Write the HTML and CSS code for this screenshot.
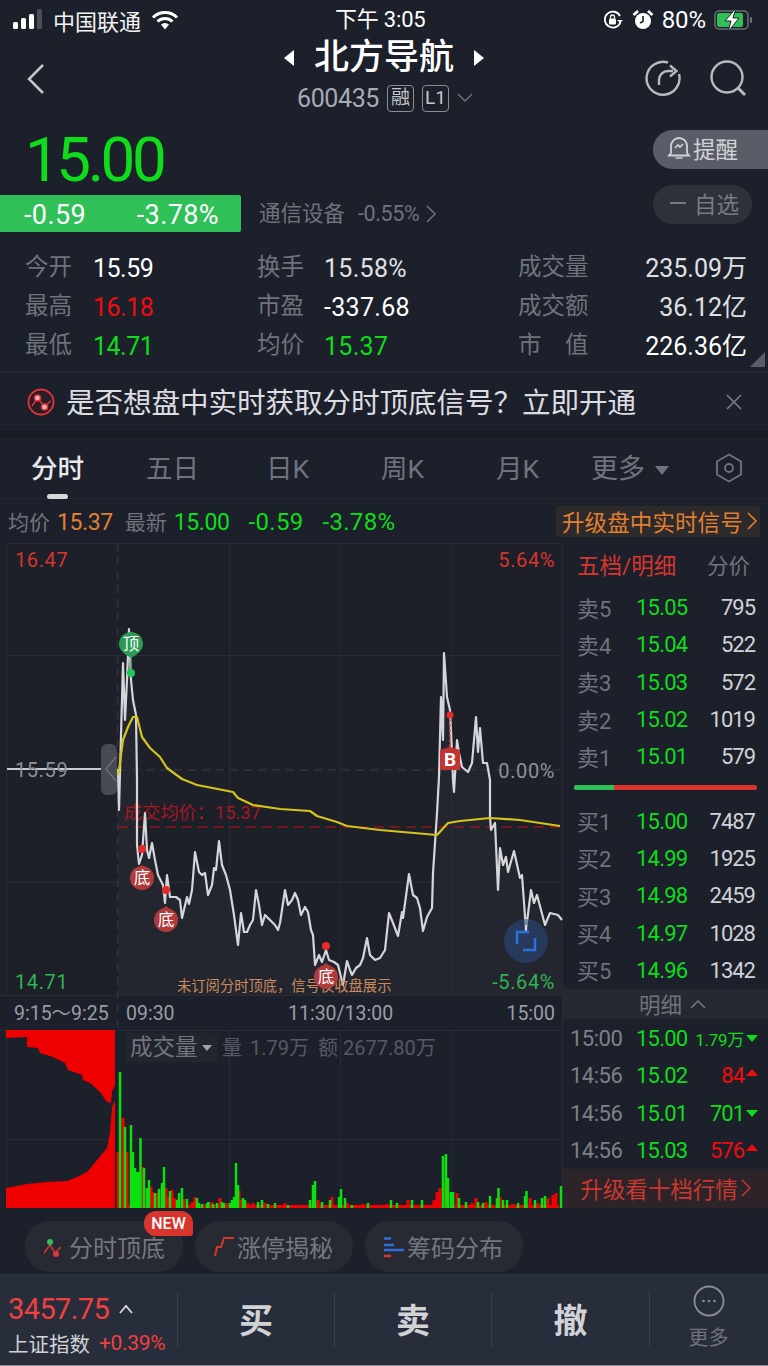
FILE: index.html
```html
<!DOCTYPE html>
<html lang="zh">
<head>
<meta charset="utf-8">
<title>北方导航</title>
<link rel="stylesheet" href="styles.css">
</head>
<body>
<div class="phone">
  <div class="status">
    <div class="status-left">
      <svg class="sig" width="32" height="24" viewBox="0 0 32 24"><rect x="0" y="14" width="5" height="7" rx="1.5" fill="#fff"/><rect x="8" y="10" width="5" height="11" rx="1.5" fill="#fff"/><rect x="16" y="6" width="5" height="15" rx="1.5" fill="#fff"/><rect x="24" y="1" width="5" height="20" rx="1.5" fill="#4b4e58"/></svg>
      <span class="carrier">中国联通</span>
      <svg class="wifi" width="28" height="22" viewBox="0 0 28 22"><path d="M2 8.5a17 17 0 0 1 24 0M6.500 12.500a11 11 0 0 1 15 0" fill="none" stroke="#fff" stroke-width="3"/><path d="M10 15.500a6 6 0 0 1 8 0L14 20.500z" fill="#fff"/></svg>
    </div>
    <span class="clock">下午 3:05</span>
    <div class="status-right">
      <svg width="22" height="22" viewBox="0 0 22 22"><path d="M18.500 13a8 8 0 1 1-.5-6" fill="none" stroke="#fff" stroke-width="1.800"/><path d="M21 11l-3 3-3-3z" fill="#fff"/><rect x="7" y="9.500" width="7" height="6" rx="1" fill="#fff"/><path d="M8.500 9.500V8a2 2 0 0 1 4 0v1.500" fill="none" stroke="#fff" stroke-width="1.300"/></svg>
      <svg class="alarm" width="22" height="22" viewBox="0 0 22 22"><circle cx="11" cy="12" r="8" fill="#fff"/><path d="M11 7v5.500l-3 1.500" fill="none" stroke="#1c202b" stroke-width="1.600"/><path d="M1.500 6L6 2M20.500 6L16 2" stroke="#fff" stroke-width="2.800"/></svg>
      <span class="batt-pct">80%</span>
      <svg width="40" height="24" viewBox="0 0 40 24"><rect x="1" y="3" width="33" height="18" rx="4" fill="none" stroke="#6c6f78" stroke-width="1.500"/><rect x="3" y="5" width="26" height="14" rx="2" fill="#2fc157"/><rect x="36" y="9" width="2" height="6" rx="1" fill="#6c6f78"/><path d="M22 0L11 13h6l-3 11 11-14h-6z" fill="#fff" stroke="#1c202b"/></svg>
    </div>
  </div>

  <header class="nav">
    <svg class="back" width="22" height="34" viewBox="0 0 22 34"><path d="M18 3L4 17l14 14" fill="none" stroke="#c4c6cb" stroke-width="2.500"/></svg>
    <div class="nav-mid">
      <div class="title-row">
        <svg width="12" height="18" viewBox="0 0 12 18"><path d="M11 1v16L1 9z" fill="#fff"/></svg>
        <span class="title">北方导航</span>
        <svg width="12" height="18" viewBox="0 0 12 18"><path d="M1 1v16L11 9z" fill="#fff"/></svg>
      </div>
      <div class="code-row">
        <span class="code">600435</span>
        <span class="tag">融</span>
        <span class="tag">L1</span>
        <svg width="16" height="10" viewBox="0 0 16 10"><path d="M1 1l7 7 7-7" fill="none" stroke="#6f737d" stroke-width="1.300"/></svg>
      </div>
    </div>
    <div class="nav-icons">
      <svg width="38" height="38" viewBox="0 0 38 38"><path d="M24 3.500A16.500 16.500 0 1 0 35 15" fill="none" stroke="#b8bac0" stroke-width="2.400"/><path d="M15 26v-5a9 9 0 0 1 9-9h5" fill="none" stroke="#b8bac0" stroke-width="2.400"/><path d="M26 6.500l6.500 5.500-6.500 5.500" fill="none" stroke="#b8bac0" stroke-width="2.400"/></svg>
      <svg width="38" height="38" viewBox="0 0 38 38"><circle cx="18" cy="18" r="15.500" fill="none" stroke="#b8bac0" stroke-width="2.400"/><path d="M29 29l7 7" stroke="#b8bac0" stroke-width="3"/></svg>
    </div>
  </header>

  <section class="quote">
    <div class="quote-top">
      <div class="quote-left">
        <div class="price">15.00</div>
        <div class="quote-sub">
          <div class="change"><span>-0.59</span><span>-3.78%</span></div>
          <span class="sector">通信设备</span>
          <span class="sector-pct">-0.55%</span>
          <svg width="12" height="20" viewBox="0 0 12 20"><path d="M2 2l8 8-8 8" fill="none" stroke="#6f737d" stroke-width="1.500"/></svg>
        </div>
      </div>
      <div class="quote-btns">
        <div class="btn-remind">
          <svg width="24" height="26" viewBox="0 0 24 26"><path d="M4 18V11a8 8 0 0 1 16 0v7l2 2.500H2z" fill="none" stroke="#d0d2d6" stroke-width="1.800"/><path d="M8.500 23h7M8 13l3-3 2 2 3-3" fill="none" stroke="#d0d2d6" stroke-width="1.600"/></svg>
          <span>提醒</span>
        </div>
        <div class="btn-watch"><span class="dash"></span><span>自选</span></div>
      </div>
    </div>
    <div class="stats">
      <div class="stat s1"><span class="lab">今开</span><span class="val">15.59</span></div>
      <div class="stat s2"><span class="lab">换手</span><span class="val soft">15.58%</span></div>
      <div class="stat s3"><span class="lab">成交量</span><span class="val soft">235.09万</span></div>
      <div class="stat s1"><span class="lab">最高</span><span class="val red">16.18</span></div>
      <div class="stat s2"><span class="lab">市盈</span><span class="val">-337.68</span></div>
      <div class="stat s3"><span class="lab">成交额</span><span class="val soft">36.12亿</span></div>
      <div class="stat s1"><span class="lab">最低</span><span class="val green">14.71</span></div>
      <div class="stat s2"><span class="lab">均价</span><span class="val green">15.37</span></div>
      <div class="stat s3"><span class="lab">市　值</span><span class="val">226.36亿</span></div>
    </div>
    <span class="corner"></span>
  </section>

  <div class="promo">
    <svg width="28" height="28" viewBox="0 0 28 28"><circle cx="14" cy="14" r="12.500" fill="#2a1d26" stroke="#e0353a" stroke-width="1.800"/><path d="M5 18l5.500-8 7 9 6-6" fill="none" stroke="#e0353a" stroke-width="1.400"/><circle cx="10.500" cy="10" r="3" fill="#f0b8b8" stroke="#e0353a" stroke-width="1.500"/><circle cx="17.500" cy="19" r="3" fill="#f0b8b8" stroke="#e0353a" stroke-width="1.500"/></svg>
    <span class="promo-text">是否想盘中实时获取分时顶底信号？立即开通</span>
    <svg class="promo-x" width="18" height="18" viewBox="0 0 18 18"><path d="M2 2l14 14M16 2L2 16" stroke="#7d8088" stroke-width="1.500"/></svg>
  </div>

  <nav class="tabs">
    <span class="tab on">分时</span>
    <span class="tab">五日</span>
    <span class="tab">日K</span>
    <span class="tab">周K</span>
    <span class="tab">月K</span>
    <span class="tab tab-more">更多<i class="tri"></i></span>
    <svg class="hex" width="28" height="30" viewBox="0 0 28 30"><path d="M14 1.500l12 7v13l-12 7-12-7v-13z" fill="none" stroke="#6f737d" stroke-width="1.800"/><circle cx="14" cy="15" r="4" fill="none" stroke="#6f737d" stroke-width="1.800"/></svg>
  </nav>

  <div class="infobar">
    <span class="ib-lab">均价</span><span class="ib-or">15.37</span>
    <span class="ib-lab ib-new">最新</span><span class="ib-gr">15.00</span>
    <span class="ib-gr ib-a">-0.59</span><span class="ib-gr ib-b">-3.78%</span>
    <span class="upgrade">升级盘中实时信号<svg width="12" height="20" viewBox="0 0 12 20"><path d="M2 2l8 8-8 8" fill="none" stroke="#e07f30" stroke-width="1.600"/></svg></span>
  </div>

  <main class="main">
    <svg class="chart" width="563" height="665" viewBox="0 543 563 665">
      <rect x="6" y="543" width="557" height="452" fill="#1d1f29"/>
      <polygon class="area" points="118,995 118,769 119,810 121,735 123,663 125,720 127,680 129,629 131,680 133,700 136,715 137,780 137,845 139,864 142,855 145,813 147,850 149,858 152,843 155,860 158,875 163,885 165,903 167,875 170,897 176,897 180,900 182,918 187,897 189,904 192,890 195,852 199,872 202,875 205,873 208,895 212,885 214,868 216,870 219,841 222,865 226,875 230,890 234,915 238,945 241,913 244,932 247,932 250,925 253,920 256,890 259,905 262,925 265,915 270,920 275,925 278,930 280,923 285,890 288,905 292,900 295,893 298,900 301,915 305,907 308,912 311,930 313,935 315,965 319,955 322,962 326,950 329,960 334,962 338,965 343,985 347,961 350,970 352,975 356,968 360,965 363,958 367,938 370,955 375,960 380,958 385,950 389,913 393,923 398,936 402,912 403,918 409,874 413,895 417,898 420,908 423,931 427,917 432,908 433,873 437,813 439,777 441,697 443,740 444,653 447,697 450,710 452,753 453,780 454,792 457,740 459,753 462,767 468,772 472,763 476,717 478,752 480,728 483,763 487,763 490,780 490,817 491,830 495,823 498,890 500,848 503,865 506,857 508,872 514,851 520,878 522,875 526,930 531,890 534,903 537,895 545,925 550,913 558,915 562,920 562,995"/>
      <path class="grid" d="M6.500 543V995M229.500 543V995M340.500 543V995M451.500 543V995M562.500 543V1208M6 543.500H563M6 655.500H563M6 882.500H563M0 995.500H563M0 1030.500H563M6 1139.500H563M229.500 1030V1208M340.500 1030V1208M451.500 1030V1208M6.500 1030V1208"/>
      <path class="grid-dash" d="M117.500 543V1030M118 770H563"/>
      <path class="avg-dash" d="M118 827H563"/>
      <path class="open-line" d="M7 769H117"/>

      <rect x="101" y="744" width="16" height="51" rx="6" fill="#474a53"/>
      <path class="handle" d="M116 757l-10 12 10 12"/>

      <text class="t-red" x="15" y="567">16.47</text>
      <text class="t-red t-end" x="555" y="567">5.64%</text>
      <text class="t-gray" x="15" y="777">15.59</text>
      <text class="t-gray t-end" x="555" y="778">0.00%</text>
      <text class="t-grn" x="15" y="989">14.71</text>
      <text class="t-grn t-end" x="555" y="989">-5.64%</text>
      <text class="t-avg" x="124" y="819">成交均价：15.37</text>

      <polyline class="price-line" points="118,769 119,810 121,735 123,663 125,720 127,680 129,629 131,680 133,700 136,715 137,780 137,845 139,864 142,855 145,813 147,850 149,858 152,843 155,860 158,875 163,885 165,903 167,875 170,897 176,897 180,900 182,918 187,897 189,904 192,890 195,852 199,872 202,875 205,873 208,895 212,885 214,868 216,870 219,841 222,865 226,875 230,890 234,915 238,945 241,913 244,932 247,932 250,925 253,920 256,890 259,905 262,925 265,915 270,920 275,925 278,930 280,923 285,890 288,905 292,900 295,893 298,900 301,915 305,907 308,912 311,930 313,935 315,965 319,955 322,962 326,950 329,960 334,962 338,965 343,985 347,961 350,970 352,975 356,968 360,965 363,958 367,938 370,955 375,960 380,958 385,950 389,913 393,923 398,936 402,912 403,918 409,874 413,895 417,898 420,908 423,931 427,917 432,908 433,873 437,813 439,777 441,697 443,740 444,653 447,697 450,710 452,753 453,780 454,792 457,740 459,753 462,767 468,772 472,763 476,717 478,752 480,728 483,763 487,763 490,780 490,817 491,830 495,823 498,890 500,848 503,865 506,857 508,872 514,851 520,878 522,875 526,930 531,890 534,903 537,895 545,925 550,913 558,915 562,920"/>
      <polyline class="avg-line" points="118,775 119,770 123,740 128,727 133,717 137,717 142,737 150,748 160,757 167,768 182,779 197,785 233,792 238,798 253,805 280,809 310,811 317,816 337,822 347,826 380,830 437,835 448,823 460,821 490,818 520,820 560,826"/>

      <text class="t-notice" x="177" y="991">未订阅分时顶底，信号仅收盘展示</text>

      <g class="sig-g"><circle cx="131" cy="673" r="4"/><path d="M131 657V669" class="stem"/><path d="M119 644a12 12 0 1 1 24 0c0 6-5 10-12 14-7-4-12-8-12-14z"/><text x="131" y="650">顶</text></g>
      <g class="sig-r"><circle class="dot" cx="142" cy="849" r="4"/><circle cx="142" cy="878" r="12"/><path d="M131 873L142 865l11 8z"/><text x="142" y="884">底</text></g>
      <g class="sig-r"><circle class="dot" cx="166" cy="890" r="4"/><circle cx="166" cy="920" r="12"/><path d="M155 915L166 906l11 9z"/><text x="166" y="926">底</text></g>
      <g class="sig-r"><circle class="dot" cx="326" cy="946" r="4"/><circle cx="326" cy="977" r="12"/><path d="M315 972L326 963l11 9z"/><text x="326" y="983">底</text></g>
      <g class="sig-b"><circle class="dot" cx="450" cy="715" r="3.500"/><path class="stem" d="M450 719V747"/><path d="M440 750l10-3 10 3v20h-20z"/><text x="450" y="766">B</text></g>

      <circle cx="526" cy="941" r="22" fill="#2c4a80" fill-opacity=".55"/>
      <path class="price-line" d="M526 925V932"/>
      <path class="focus" d="M517 944V932H529M535 938V950H523"/>

      <text class="t-axis" x="14" y="1020">9:15～9:25</text>
      <text class="t-axis" x="126" y="1020">09:30</text>
      <text class="t-axis" x="288" y="1020">11:30/13:00</text>
      <text class="t-axis t-end" x="555" y="1020">15:00</text>

      <polygon class="bar-red-fill" points="6,1030 115,1030 115,1085 112,1092 111,1103 107,1102 100,1092 90,1083 83,1080 82,1075 68,1070 65,1063 53,1057 40,1053 38,1048 27,1047 27,1037 6,1038"/>
      <polygon class="bar-red-fill" points="6,1208 115,1208 115,1100 112,1107 110,1133 107,1148 97,1160 87,1172 77,1177 67,1181 47,1182 27,1184 6,1188"/>

      <rect x="118" y="1205" width="441" height="3" fill="#f00000"/>
      <path class="vol-red" d="M118 1208V1152M123 1208V1118M127 1208V1152M143 1208V1167M151 1208V1187M153 1208V1192M157 1208V1193M166 1208V1188M168 1208V1197M172 1208V1190M175 1208V1198M184 1208V1199M192 1208V1202M195 1208V1197M203 1208V1204M212 1208V1202M220 1208V1198M227 1208V1203M239 1208V1190M242 1208V1200M248 1208V1203M253 1208V1203M265 1208V1203M272 1208V1205M285 1208V1203M318 1208V1200M332 1208V1197M347 1208V1203M363 1208V1204M387 1208V1204M408 1208V1200M434 1208V1200M437 1208V1192M440 1208V1188M444 1208V1183M457 1208V1193M472 1208V1203M476 1208V1198M486 1208V1202M500 1208V1197M513 1208V1204M530 1208V1198M538 1208V1203M548 1208V1198M553 1208V1195M556 1208V1193"/>
      <path class="vol-green" d="M120 1208V1072M125 1208V1127M131 1208V1125M133 1208V1152M135 1208V1168M137 1208V1172M139 1208V1172M140.500 1208V1138M144 1208V1168M147 1208V1188M149 1208V1180M155 1208V1193M159 1208V1189M162 1208V1183M164 1208V1167M170 1208V1191M177 1208V1200M179 1208V1193M182 1208V1188M187 1208V1199M197 1208V1198M199 1208V1203M202 1208V1204M207 1208V1203M208.500 1208V1202M213 1208V1204M217 1208V1203M222 1208V1202M224 1208V1203M230 1208V1203M232 1208V1200M234 1208V1197M236 1208V1163M238 1208V1185M243 1208V1198M245 1208V1200M258 1208V1202M262 1208V1200M268 1208V1204M275 1208V1203M288 1208V1205M310 1208V1200M313 1208V1185M315 1208V1181M322 1208V1202M330 1208V1200M339 1208V1197M341 1208V1189M345 1208V1198M352 1208V1205M368 1208V1203M391 1208V1200M397 1208V1203M412 1208V1200M422 1208V1200M443 1208V1156M446 1208V1154M448 1208V1178M451 1208V1192M453 1208V1192M459 1208V1198M466 1208V1202M478 1208V1202M483 1208V1203M490 1208V1196M497 1208V1198M498.500 1208V1188M503 1208V1200M507 1208V1200M518 1208V1203M525 1208V1196M526.500 1208V1191M535 1208V1200M542 1208V1198M545 1208V1196M561 1208V1186"/>

      <rect x="125" y="1033" width="93" height="29" rx="5" fill="#22252e"/>
      <text class="t-vol-main" x="130" y="1055">成交量</text>
      <path d="M202 1045h10l-5 6z" fill="#a0a2a8"/>
      <text class="t-vol" x="222" y="1055">量</text>
      <text class="t-vol" x="250" y="1055">1.79万</text>
      <text class="t-vol" x="318" y="1055">额</text>
      <text class="t-vol" x="343" y="1055">2677.80万</text>
    </svg>

    <aside class="side">
      <div class="side-head"><span class="sh-main">五档/明细</span><span class="sh-sub">分价</span></div>
      <div class="book">
        <div class="row"><span class="r-lab">卖5</span><span class="r-p">15.05</span><span class="r-q">795</span></div>
        <div class="row"><span class="r-lab">卖4</span><span class="r-p">15.04</span><span class="r-q">522</span></div>
        <div class="row"><span class="r-lab">卖3</span><span class="r-p">15.03</span><span class="r-q">572</span></div>
        <div class="row"><span class="r-lab">卖2</span><span class="r-p">15.02</span><span class="r-q">1019</span></div>
        <div class="row"><span class="r-lab">卖1</span><span class="r-p">15.01</span><span class="r-q">579</span></div>
      </div>
      <div class="ratio"><span class="ratio-g"></span></div>
      <div class="book">
        <div class="row"><span class="r-lab">买1</span><span class="r-p">15.00</span><span class="r-q">7487</span></div>
        <div class="row"><span class="r-lab">买2</span><span class="r-p">14.99</span><span class="r-q">1925</span></div>
        <div class="row"><span class="r-lab">买3</span><span class="r-p">14.98</span><span class="r-q">2459</span></div>
        <div class="row"><span class="r-lab">买4</span><span class="r-p">14.97</span><span class="r-q">1028</span></div>
        <div class="row"><span class="r-lab">买5</span><span class="r-p">14.96</span><span class="r-q">1342</span></div>
      </div>
      <div class="detail-head">明细<svg width="16" height="10" viewBox="0 0 16 10"><path d="M1 9l7-7 7 7" fill="none" stroke="#6f737d" stroke-width="1.600"/></svg></div>
      <div class="trades">
        <div class="trade"><span class="t-time">15:00</span><span class="r-p">15.00</span><span class="t-q down small">1.79万</span><i class="ar-d"></i></div>
        <div class="trade"><span class="t-time">14:56</span><span class="r-p">15.02</span><span class="t-q up">84</span><i class="ar-u"></i></div>
        <div class="trade"><span class="t-time">14:56</span><span class="r-p">15.01</span><span class="t-q down">701</span><i class="ar-d"></i></div>
        <div class="trade"><span class="t-time">14:56</span><span class="r-p">15.03</span><span class="t-q up">576</span><i class="ar-u"></i></div>
      </div>
      <div class="side-up">升级看十档行情<svg width="10" height="18" viewBox="0 0 10 18"><path d="M1 1l8 8-8 8" fill="none" stroke="#c9372f" stroke-width="1.500"/></svg></div>
    </aside>
  </main>

  <div class="chips">
    <div class="chip chip-new">
      <svg width="24" height="24" viewBox="0 0 24 24"><path d="M1 18l6-8 5 8 6-6" fill="none" stroke="#c9372f" stroke-width="1.600"/><circle cx="7" cy="7" r="3" fill="#2fc157"/><circle cx="13" cy="19" r="3" fill="#e0353a"/></svg>
      <span>分时顶底</span>
      <b class="new">NEW</b>
    </div>
    <div class="chip">
      <svg width="22" height="24" viewBox="0 0 22 24"><path d="M2 21l2-9h4l3-9h10" fill="none" stroke="#d8352d" stroke-width="2"/></svg>
      <span>涨停揭秘</span>
    </div>
    <div class="chip">
      <svg width="22" height="24" viewBox="0 0 22 24"><path d="M1 3.500h7M1 10h10" stroke="#2f6fdd" stroke-width="2.500"/><path d="M1 15h20" stroke="#2f6fdd" stroke-width="2.500"/><path d="M1 21h7" stroke="#d8352d" stroke-width="2.500"/></svg>
      <span>筹码分布</span>
    </div>
  </div>

  <footer class="bottom">
    <div class="index">
      <div class="idx-top"><span class="idx-val">3457.75</span><svg width="14" height="10" viewBox="0 0 14 10"><path d="M1 9l6-7 6 7" fill="none" stroke="#d8d9dc" stroke-width="1.800"/></svg></div>
      <div class="idx-sub"><span class="idx-name">上证指数</span><span class="idx-pct">+0.39%</span></div>
    </div>
    <div class="act">买</div>
    <div class="act">卖</div>
    <div class="act">撤</div>
    <div class="more">
      <svg width="32" height="32" viewBox="0 0 32 32"><circle cx="16" cy="16" r="14.500" fill="none" stroke="#8a8d94" stroke-width="1.800"/><circle cx="10.500" cy="16" r="1.300" fill="#8a8d94"/><circle cx="16" cy="16" r="1.300" fill="#8a8d94"/><circle cx="21.500" cy="16" r="1.300" fill="#8a8d94"/></svg>
      <span>更多</span>
    </div>
  </footer>
</div>
</body>
</html>
```
FILE: styles.css
```css
* { box-sizing: border-box; }
html, body { margin: 0; padding: 0; background: #1c202b; }
body { font-family: Roboto, "Noto Sans CJK SC", sans-serif; color: #fff; }
svg { display: block; flex: none; }
.phone { width: 768px; height: 1366px; overflow: hidden; display: flex; flex-direction: column; background: #1c202b; }

/* status bar */
.status { height: 40px; display: flex; align-items: center; justify-content: space-between; position: relative; padding: 0 14px 0 13px; }
.status-left, .status-right { display: flex; align-items: center; }
.carrier { font-size: 22px; margin-left: 8px; color: #f2f2f2; }
.wifi { margin-left: 10px; }
.clock { position: absolute; left: 335px; top: 3px; font-size: 22px; line-height: 34px; letter-spacing: -.2px; }
.status-right { gap: 8px; }
.batt-pct { font-size: 24px; letter-spacing: -.1px; }

/* nav */
.nav { height: 80px; display: flex; align-items: flex-start; position: relative; }
.back { margin: 22px 0 0 25px; }
.nav-mid { position: absolute; left: 0; right: 0; top: -5px; display: flex; flex-direction: column; align-items: center; }
.title-row { display: flex; align-items: center; gap: 19px; height: 46px; }
.title { font-size: 35px; font-weight: 500; line-height: 46px; }
.code-row { display: flex; align-items: center; gap: 8px; height: 30px; margin-top: 2px; margin-left: 2px; }
.code { font-size: 25px; color: #a8abb3; letter-spacing: -.4px; }
.tag { border: 1px solid #8a8d94; border-radius: 4px; font-size: 19px; line-height: 24px; height: 27px; width: 27px; text-align: center; color: #c4c6cb; }
.nav-icons { margin-left: auto; display: flex; gap: 27px; padding: 19px 21px 0 0; }

/* quote */
.quote { height: 252px; position: relative; }
.quote-top { display: flex; justify-content: space-between; }
.price { font-size: 62px; line-height: 79px; height: 75px; color: #0fdc1a; letter-spacing: -3.500px; padding-left: 25px; }
.quote-sub { display: flex; align-items: center; height: 37px; }
.change { width: 241px; height: 37px; background: #2fc157; border-radius: 0 2px 2px 0; display: flex; justify-content: space-between; align-items: center; padding: 3px 22px 0 24px; font-size: 27px; letter-spacing: .4px; }
.sector { margin: -4px 0 0 18px; font-size: 21.500px; color: #6f737d; }
.sector-pct { margin-left: 13px; font-size: 21.500px; color: #6f737d; margin-right: 6px; letter-spacing: -.4px; }
.quote-btns { display: flex; flex-direction: column; align-items: flex-start; width: 115px; padding-top: 10px; gap: 16px; }
.btn-remind { width: 115px; height: 39px; background: #5a5d67; border-radius: 20px 0 0 20px; display: flex; align-items: center; gap: 2px; padding: 0 0 3px 14px; font-size: 22.500px; color: #d0d2d6; }
.btn-watch { width: 99px; height: 39px; background: #2e313a; border-radius: 20px; display: flex; align-items: center; gap: 8px; padding: 0 0 3px 17px; font-size: 22.500px; color: #777a82; }
.dash { width: 16px; height: 2px; background: #777a82; }
.stats { display: grid; grid-template-columns: 232px 261px 1fr; grid-auto-rows: 39px; padding: 15px 21px 0 25px; }
.stat { display: flex; align-items: center; white-space: nowrap; }
.lab { font-size: 23.500px; color: #6f737d; margin-top: -4px; }
.val { font-size: 25px; letter-spacing: -.5px; color: #fff; margin-top: 4px; }
.val.soft { color: #e0e1e4; }
.s1 .lab { width: 68px; }
.s2 .lab { width: 67px; }
.s2 .val { letter-spacing: .3px; }
.s3 .val { margin: -2px 0 0 auto; letter-spacing: 0; }
.red { color: #f10c0c; }
.green { color: #0fdc1a; }
.corner { position: absolute; right: 3px; bottom: 5px; width: 0; height: 0; border-style: solid; border-width: 0 0 15px 15px; border-color: transparent transparent #5a5d67 transparent; }

/* promo */
.promo { height: 59px; border-top: 1px solid #262934; display: flex; align-items: center; padding-left: 27px; }
.promo-text { margin: -4px 0 0 11px; font-size: 28.600px; color: #dcdde0; white-space: nowrap; letter-spacing: -.1px; }
.promo-x { margin-left: auto; margin-right: 25px; }

/* tabs */
.tabs { border-top: 6px solid #171a23; height: 68px; display: grid; grid-template-columns: repeat(6, 115px) auto; align-items: center; position: relative; border-bottom: 1px solid #262934; }
.tab { text-align: center; font-size: 26.500px; color: #6f737d; padding-bottom: 2px; white-space: nowrap; }
.tab-more { font-size: 27px; padding-right: 5px; }
.tab.on { color: #e8e9eb; font-weight: 500; position: relative; }
.tab.on::after { content: ""; position: absolute; left: 47px; bottom: -11px; width: 21px; height: 5px; border-radius: 3px; background: #d8d9dc; }
.tri { display: inline-block; width: 0; height: 0; margin-left: 10px; vertical-align: 3px; border-style: solid; border-width: 9px 7px 0 7px; border-color: #6f737d transparent transparent transparent; }
.hex { margin-left: 25px; }

/* info bar */
.infobar { height: 44px; display: flex; align-items: center; padding-left: 8px; font-size: 23px; letter-spacing: -.4px; white-space: nowrap; }
.ib-lab { font-size: 21px; color: #6f737d; letter-spacing: 0; }
.ib-or { color: #e07f30; margin: 2px 0 0 7px; }
.ib-new { margin-left: 12px; }
.ib-gr { color: #0fdc1a; margin: 2px 0 0 7px; }
.ib-a { margin-left: 19px; letter-spacing: .3px; font-size: 24px; }
.ib-b { margin-left: 19px; letter-spacing: .3px; font-size: 24px; }
.upgrade { margin-left: auto; margin-right: 8px; height: 31px; width: 204px; background: #2c2a2b; border-radius: 3px; color: #e07f30; font-size: 22.500px; letter-spacing: .1px; display: flex; align-items: center; padding-left: 6px; gap: 3px; }

/* chart */
.main { height: 665px; display: flex; }
.chart { width: 563px; height: 665px; }
.chart text { font-family: Roboto, "Noto Sans CJK SC", sans-serif; }
.area { fill: #ffffff; fill-opacity: .03; }
.grid { stroke: #282b36; stroke-width: 1; fill: none; }
.grid-dash { stroke: #30333f; stroke-width: 1.500; fill: none; stroke-dasharray: 8 6; }
.avg-dash { stroke: #8c1620; stroke-width: 1.500; stroke-dasharray: 10 6; fill: none; }
.open-line { stroke: #c8cacd; stroke-width: 2; }
.handle { fill: none; stroke: #6f737d; stroke-width: 1.300; }
.price-line { fill: none; stroke: #d5d6d9; stroke-width: 2.200; stroke-linejoin: round; }
.avg-line { fill: none; stroke: #d3c51b; stroke-width: 2.200; stroke-linejoin: round; }
.t-red, .t-gray, .t-grn { font-size: 20px; letter-spacing: .6px; }
.t-axis { font-size: 19.500px; letter-spacing: 0; fill: #9a9da5; }
.t-red { fill: #d8352d; }
.t-gray { fill: #8e9199; }
.t-grn { fill: #2fb350; }
.t-end { text-anchor: end; }
.t-avg { fill: #a81820; font-size: 18.200px; }
.t-notice { fill: #c98a5e; font-size: 14.300px; }
.sig-g path, .sig-g circle { fill: #2b9a52; }
.sig-g circle { fill: #22c55a; }
.sig-g path.stem { stroke: #2b9a52; fill: none; }
.sig-r circle, .sig-r path { fill: #b03a3a; }
.sig-r .dot, .sig-b .dot { fill: #e32b2b; }
.sig-b path { fill: #c23434; }
.sig-b path.stem { fill: none; stroke: #e05050; stroke-width: 1.500; stroke-dasharray: 3 2; }
.sig-g text, .sig-r text, .sig-b text { fill: #fff; font-size: 16.500px; text-anchor: middle; }
.sig-b text { font-weight: 700; font-size: 19px; }
.focus { fill: none; stroke: #2a72e0; stroke-width: 2.500; }
.bar-red-fill { fill: #ee0000; }
.vol-red { stroke: #f00000; stroke-width: 3; fill: none; }
.vol-green { stroke: #0be00f; stroke-width: 2.500; fill: none; }
.t-vol-main { fill: #72757d; font-size: 22.500px; }
.t-vol { fill: #565963; font-size: 20px; }

/* side panel */
.side { width: 205px; display: flex; flex-direction: column; }
.side-head { height: 46px; display: flex; align-items: center; justify-content: space-between; padding: 0 18px 4px 14px; flex: none; }
.sh-main { color: #d8352d; font-size: 22.500px; }
.sh-sub { color: #6f737d; font-size: 21.500px; }
.book { display: flex; flex-direction: column; flex: none; }
.row { height: 37.300px; display: flex; align-items: center; padding: 0 13px 0 14px; font-size: 22px; }
.r-lab { width: 59px; color: #6f737d; font-size: 22px; white-space: nowrap; flex: none; margin-top: -2px; }
.r-p { color: #0fdc1a; letter-spacing: -.8px; font-size: 22px; width: 56px; flex: none; }
.r-q { margin-left: auto; color: #d0d2d6; letter-spacing: -1px; }
.ratio { height: 5px; margin: 10px 11px 12px 11px; background: #d8352d; border-radius: 3px; overflow: hidden; flex: none; }
.ratio-g { display: block; width: 40px; height: 5px; background: #2fc157; }
.detail-head { height: 30px; background: #262932; color: #6f737d; font-size: 21.500px; display: flex; align-items: center; justify-content: center; gap: 8px; padding-left: 14px; flex: none; }
.trades { display: flex; flex-direction: column; padding-top: 1px; flex: none; }
.trade { height: 37.300px; display: flex; align-items: center; padding: 0 10px 0 7px; font-size: 22px; }
.t-time { width: 66px; color: #7d8088; font-size: 22px; letter-spacing: -.5px; flex: none; }
.t-q { margin-left: auto; letter-spacing: -1px; white-space: nowrap; }
.t-q.small { font-size: 17px; letter-spacing: -.3px; }
.down { color: #0fdc1a; }
.up { color: #f10c0c; }
.ar-d, .ar-u { width: 0; height: 0; margin-left: 2px; border-style: solid; flex: none; }
.ar-d { border-width: 7px 6.500px 0 6.500px; border-color: #0fdc1a transparent transparent transparent; }
.ar-u { border-width: 0 6.500px 7px 6.500px; border-color: transparent transparent #f10c0c transparent; margin-bottom: 6px; }
.side-up { flex: 1; min-height: 38px; background: #2c2428; color: #c9372f; font-size: 22.500px; padding-bottom: 2px; display: flex; align-items: center; justify-content: center; gap: 3px; }

/* chips */
.chips { height: 66px; display: flex; gap: 12px; padding: 13px 0 0 25px; position: relative; flex: none; }
.chip { width: 158px; height: 51px; border-radius: 25px; background: #282a33; display: flex; align-items: center; padding-left: 18px; gap: 2px; font-size: 24px; color: #74777f; position: relative; white-space: nowrap; }
.new { position: absolute; left: 119px; top: -10px; width: 49px; height: 25px; border-radius: 12px 12px 3px 12px; background: #d8352d; color: #fff; font-size: 16px; font-weight: 500; text-align: center; line-height: 25px; }

/* bottom */
.bottom { flex: 1; background: #282d3b; display: grid; grid-template-columns: 177px 157px 157px 158px 1fr; align-items: center; border-bottom: 1px solid #8a8d94; }
.index { padding-left: 8px; white-space: nowrap; }
.idx-top { display: flex; align-items: center; gap: 10px; height: 42px; margin-top: 7px; }
.idx-val { color: #f04040; font-size: 29px; letter-spacing: -.6px; }
.idx-sub { display: flex; align-items: center; gap: 9px; height: 30px; margin-top: -2px; }
.idx-name { color: #d0d2d6; font-size: 20.500px; }
.idx-pct { color: #f04040; font-size: 21px; letter-spacing: -.3px; }
.act { height: 56px; border-left: 1px solid #3a3e4c; display: flex; align-items: center; justify-content: center; font-size: 34px; font-weight: 700; color: #d0d2d6; padding-bottom: 3px; }
.more { height: 76px; margin-top: 2px; display: flex; flex-direction: column; align-items: center; color: #6f737d; font-size: 20px; position: relative; line-height: 28px; gap: 7px; padding-top: 2px; }
.more::before { content: ""; position: absolute; left: 0; top: 8px; height: 56px; width: 1px; background: #3a3e4c; }
```
